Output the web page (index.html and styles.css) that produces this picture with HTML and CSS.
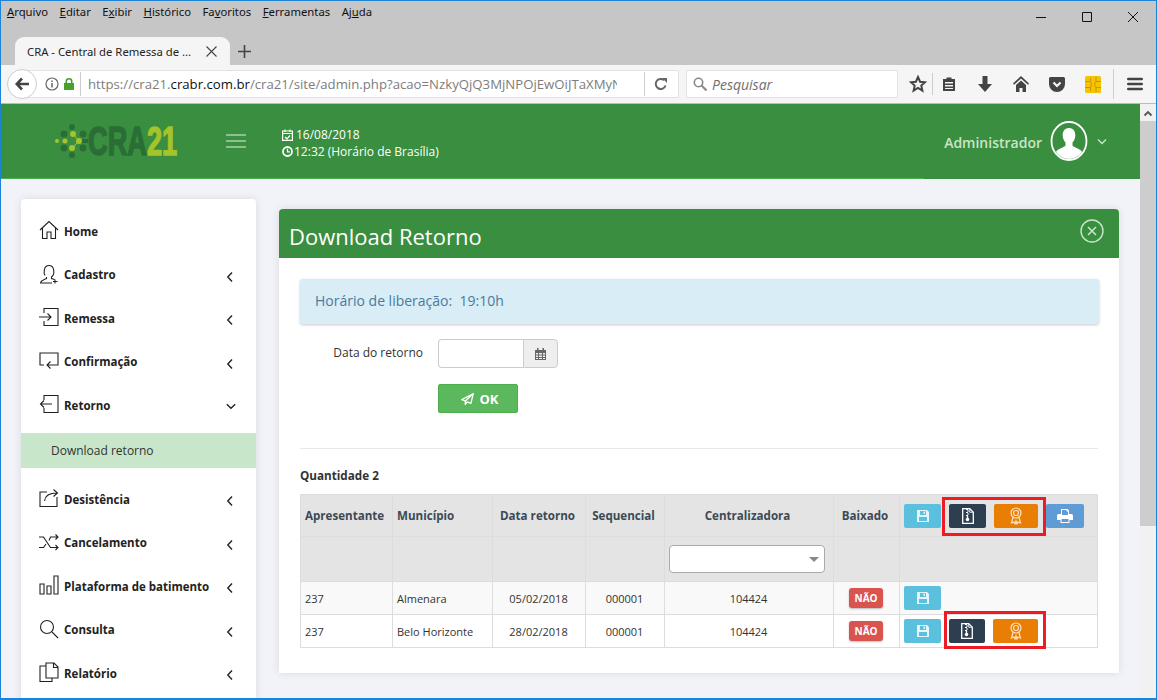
FILE: index.html
```html
<!DOCTYPE html>
<html lang="pt-BR">
<head>
  <meta charset="UTF-8" />
  <title>CRA - Central de Remessa de Arquivos</title>
  <link rel="stylesheet" href="styles.css">
</head>
<body>
  <svg class="defs" width="0" height="0">
    <symbol id="i-save" viewBox="0 0 14 14"><path fill="#e4f6fb" fill-rule="evenodd" d="M1 1h10l2 2v10H1zM4 2v4h6V2zM3 8v4h8V8z"/><path fill="#e4f6fb" d="M7.500 2.500h1.500v2.500H7.500z"/></symbol>
    <symbol id="i-zip" viewBox="0 0 14 16"><path fill="none" stroke="#fff" stroke-width="1.300" d="M1.700.700h7l3.600 3.600v11H1.700z"/><path fill="none" stroke="#cfe3f5" d="M8.700.700v3.600h3.600"/><path fill="#fff" d="M5 1h2v1H5zM6 2.500h2v1H6zM5 4h2v1H5zM6 5.500h2v1H6zM5 7h2v1H5z"/><circle cx="6.500" cy="11.500" r="1.800" fill="#fff"/><path fill="#fff" d="M5.800 8h1.400v3H5.800z"/></symbol>
    <symbol id="i-award" viewBox="0 0 14 18"><g fill="none" stroke="#ffe3bd" stroke-width="1.200"><circle cx="7" cy="6" r="5"/><circle cx="7" cy="6" r="2.500"/><path d="M4 10.500 2.500 16l2.500-1 1 2 1-3 1 3 1-2 2.500 1L10 10.500"/></g></symbol>
    <symbol id="i-left" viewBox="0 0 8 12"><path fill="none" stroke="#222" stroke-width="1.400" d="M6 1.500 1.800 6 6 10.500"/></symbol>
  </svg>

  <div class="janela">
    <header class="navegador">
      <div class="barra-menu">
        <nav class="menu">
          <span><u>A</u>rquivo</span>
          <span><u>E</u>ditar</span>
          <span>E<u>x</u>ibir</span>
          <span><u>H</u>istórico</span>
          <span>Fa<u>v</u>oritos</span>
          <span><u>F</u>erramentas</span>
          <span>Aj<u>u</u>da</span>
        </nav>
        <div class="controles">
          <svg width="12" height="12" viewBox="0 0 12 12"><path stroke="#111" d="M1 6.500h10"/></svg>
          <svg width="12" height="12" viewBox="0 0 12 12"><path fill="none" stroke="#111" d="M1.500 1.500h9v9h-9z"/></svg>
          <svg width="12" height="12" viewBox="0 0 12 12"><path stroke="#111" d="M1 1l10 10M11 1 1 11"/></svg>
        </div>
      </div>
      <div class="barra-abas">
        <div class="aba">
          <span class="aba-titulo">CRA - Central de Remessa de ...</span>
          <svg width="11" height="11" viewBox="0 0 11 11"><path stroke="#444" stroke-width="1.100" d="M.5.500l10 10M10.500.500l-10 10"/></svg>
        </div>
        <svg class="nova-aba" width="13" height="13" viewBox="0 0 13 13"><path stroke="#444" stroke-width="1.600" d="M6.500 0v13M0 6.500h13"/></svg>
      </div>
      <div class="barra-url">
        <div class="voltar">
          <svg width="14" height="14" viewBox="0 0 14 14"><path fill="none" stroke="#444" stroke-width="2.600" d="M7 1.500 1.800 7 7 12.500M2 7h12"/></svg>
        </div>
        <div class="url">
          <svg class="url-info" width="14" height="14" viewBox="0 0 14 14"><circle cx="7" cy="7" r="6" fill="none" stroke="#666" stroke-width="1.200"/><path stroke="#666" stroke-width="1.500" d="M7 6v4.500M7 3.500v1.500"/></svg>
          <svg class="url-cadeado" width="10" height="12" viewBox="0 0 10 12"><path fill="#4aa02c" d="M0 5h10v7H0z"/><path fill="none" stroke="#4aa02c" stroke-width="1.600" d="M2.300 5V3.200a2.700 2.400 0 0 1 5.400 0V5"/></svg>
          <span class="url-texto">https://cra21.<b>crabr.com.br</b>/cra21/site/admin.php?acao=NzkyQjQ3MjNPOjEwOiJTaXMyN</span>
          <span class="url-recarregar">
            <svg width="14" height="14" viewBox="0 0 14 14"><path fill="none" stroke="#666" stroke-width="2" d="M11.500 8.500A5 5 0 1 1 10 3.200"/><path fill="#666" d="M8 1h5v5z"/></svg>
          </span>
        </div>
        <div class="busca">
          <svg width="14" height="14" viewBox="0 0 14 14"><circle cx="5.500" cy="5.500" r="4.200" fill="none" stroke="#888" stroke-width="1.600"/><path stroke="#888" stroke-width="2" d="M8.500 8.500l5 5"/></svg>
          <span>Pesquisar</span>
        </div>
        <div class="ferramentas">
          <svg class="f-estrela" width="18" height="18" viewBox="0 0 18 18"><path fill="none" stroke="#444" stroke-width="2" d="M9 2l2.100 4.700 5 .5-3.800 3.400 1.100 5L9 13l-4.400 2.600 1.100-5L1.900 7.200l5-.5z"/></svg>
          <i class="sep sep-estrela"></i>
          <svg class="f-lista" width="14" height="16" viewBox="0 0 14 16"><path fill="#444" fill-rule="evenodd" d="M1 3h3.500V1.500h5V3H13v12H1zM3 6v1.500h8V6zM3 9v1.500h8V9zM3 12v1h8v-1z"/></svg>
          <svg class="f-baixar" width="14" height="16" viewBox="0 0 14 16"><path fill="#444" d="M4.500 0h5v8H14l-7 8-7-8h4.500z"/></svg>
          <svg class="f-casa" width="16" height="16" viewBox="0 0 16 16"><path fill="#444" d="M8 0l8 7.500-1 1.300L8 2.600 1 8.800 0 7.500zM3 9l5-4.500L13 9v7H9.500v-4h-3v4H3z"/></svg>
          <svg class="f-pocket" width="16" height="15" viewBox="0 0 16 15"><path fill="#444" d="M1.500 0h13A1.500 1.500 0 0 1 16 1.500V7A8 8 0 0 1 0 7V1.500A1.500 1.500 0 0 1 1.500 0z"/><path fill="none" stroke="#f5f5f5" stroke-width="2.200" d="M4.500 5.500 8 9l3.500-3.500"/></svg>
          <svg class="f-chip" width="16" height="17" viewBox="0 0 16 17"><rect width="16" height="17" rx="1.500" fill="#f5c400"/><path fill="none" stroke="#c99600" d="M0 5.500h5.500V2M16 5.500h-5V1M0 11.500h5.500V15M16 11.500h-5V16M5.500 5.500c1 2 1 4 0 6M10.500 5.500c-1 2-1 4 0 6"/></svg>
          <i class="sep sep-menu"></i>
          <svg class="f-menu" width="16" height="14" viewBox="0 0 16 14"><path stroke="#444" stroke-width="2.600" stroke-linecap="round" d="M1.300 2h13.400M1.300 7h13.400M1.300 12h13.400"/></svg>
        </div>
      </div>
    </header>

    <div class="visor">
      <div class="pagina">
        <div class="topo">
          <div class="logo">
            <svg width="33" height="34" viewBox="0 0 33 34">
              <g fill="#2a6e35"><circle cx="17" cy="3" r="3"/><circle cx="17" cy="31" r="3"/><circle cx="9" cy="10" r="3.500"/><circle cx="9" cy="24" r="3.500"/><circle cx="28" cy="10" r="3.500"/><circle cx="28" cy="24" r="3.500"/><path d="M26 15h7v4h-7z"/></g>
              <g fill="#a5c32b"><circle cx="2" cy="17" r="2"/><circle cx="10" cy="17" r="2.500"/><circle cx="18" cy="10" r="3"/><circle cx="24" cy="17" r="3"/><circle cx="17" cy="24" r="3"/></g>
              <path fill="none" stroke="#a5c32b" d="M18 10l6 7-7 7"/>
            </svg>
            <span class="logo-nome">CRA<b>21</b></span>
          </div>
          <svg class="hamburguer" width="20" height="14" viewBox="0 0 20 14"><path stroke="#8cc08f" stroke-width="2" d="M0 1h20M0 7h20M0 13h20"/></svg>
          <div class="data-hora">
            <div class="data-linha">
              <svg width="11" height="12" viewBox="0 0 11 12"><path fill="none" stroke="#fff" stroke-width="1.200" d="M.6 2h9.800v9.400H.6zM.6 4.500h9.800M3 .5v2.500M8 .5v2.500M3 8l2 1.800L8 6.500"/></svg>
              16/08/2018
            </div>
            <div class="data-linha hora">
              <svg width="11" height="11" viewBox="0 0 11 11"><circle cx="5.500" cy="5.500" r="4.500" fill="none" stroke="#fff" stroke-width="1.800"/><path fill="none" stroke="#fff" stroke-width="1.200" d="M5.500 2.800v3h2.400"/></svg>
              12:32 (Horário de Brasília)
            </div>
          </div>
          <div class="usuario">
            <span>Administrador</span>
            <svg width="38" height="40" viewBox="0 0 38 40">
              <ellipse cx="19" cy="20" rx="17.500" ry="19" fill="#3a8e3f" stroke="#fff" stroke-width="1.800"/>
              <path fill="#fff" d="M19 7c4 0 6.500 3 6.300 7.500-.2 3-1.300 5.500-2.800 7v3c1 2 8 3 9.500 6.500A17 18 0 0 1 19 38 17 18 0 0 1 6 31c1.500-3.500 8.500-4.500 9.500-6.500v-3c-1.500-1.500-2.600-4-2.800-7C12.500 10 15 7 19 7z"/>
            </svg>
            <svg width="10" height="7" viewBox="0 0 10 7"><path fill="none" stroke="#c8e6c9" stroke-width="1.400" d="M1 1.500l4 4 4-4"/></svg>
          </div>
        </div>
        <div class="progresso"></div>

        <div class="principal">
          <aside class="lateral">
            <a class="item">
              <svg viewBox="0 0 20 20"><path d="M1 10 10 1.500 19 10M3.500 8v10.500H8V12h4v6.500h4.500V8"/></svg>
              <span>Home</span>
            </a>
            <a class="item">
              <svg viewBox="0 0 20 20"><path d="M6 11.500C4.500 9 4.500 1.500 10 1.500S15.500 9 14 11.500l-1.500 1.500v1.500l3 1M7.500 13v1.500C6 15.500 2 16 1.500 19H13M16 15.500v4M14 17.500h4.500"/></svg>
              <span>Cadastro</span>
              <svg class="seta"><use href="#i-left"/></svg>
            </a>
            <a class="item">
              <svg viewBox="0 0 20 20"><path d="M5 6V1.500h14v17H5V14M0 10h12M8.500 6.500l3.500 3.500-3.500 3.500"/></svg>
              <span>Remessa</span>
              <svg class="seta"><use href="#i-left"/></svg>
            </a>
            <a class="item">
              <svg viewBox="0 0 20 20"><path d="M5 14H1V2h18v12H8M11.500 10.500 8 14l3.500 3.500"/></svg>
              <span>Confirmação</span>
              <svg class="seta"><use href="#i-left"/></svg>
            </a>
            <a class="item">
              <svg viewBox="0 0 20 20"><path d="M5 6V1.500h14v17H5V14M2 10h11M5 6.500 1.500 10 5 13.500"/></svg>
              <span>Retorno</span>
              <svg class="seta-baixo" width="10" height="7" viewBox="0 0 10 7"><path fill="none" stroke="#222" stroke-width="1.400" d="M.8 1.200 5 5.300l4.200-4.100"/></svg>
            </a>
            <a class="subitem">Download retorno</a>
            <a class="item">
              <svg viewBox="0 0 20 20"><path d="M8 4H1v14.500h17V9M5.500 13C6 8 10 5 18 5M14.500 1.500 18.500 5l-4 3.500"/></svg>
              <span>Desistência</span>
              <svg class="seta"><use href="#i-left"/></svg>
            </a>
            <a class="item">
              <svg viewBox="0 0 20 20"><path d="M0 5h4.500l7 10.500H19M0 15.500h4.500L7 12M10 8.500 11.500 5H19M16.500 2.500 19 5l-2.500 2.500M16.500 13l2.500 2.500-2.500 2.500"/></svg>
              <span>Cancelamento</span>
              <svg class="seta"><use href="#i-left"/></svg>
            </a>
            <a class="item">
              <svg viewBox="0 0 20 20"><path d="M1 9h4v10H1zM8 11h4v8H8zM15 1h4v18h-4z"/></svg>
              <span>Plataforma de batimento</span>
              <svg class="seta"><use href="#i-left"/></svg>
            </a>
            <a class="item">
              <svg viewBox="0 0 20 20"><circle cx="8" cy="8" r="6.500"/><path d="M13 13l6 6"/></svg>
              <span>Consulta</span>
              <svg class="seta"><use href="#i-left"/></svg>
            </a>
            <a class="item">
              <svg viewBox="0 0 20 20"><path d="M7 4H1v15.500h12V16M7 16V1h8l4 4v11zM14.500 1v4.500H19"/></svg>
              <span>Relatório</span>
              <svg class="seta"><use href="#i-left"/></svg>
            </a>
          </aside>

          <main class="painel">
            <div class="painel-topo">
              <h1>Download Retorno</h1>
              <svg width="24" height="24" viewBox="0 0 24 24"><circle cx="12" cy="12" r="11" fill="none" stroke="#c8e6c9" stroke-width="1.400"/><path stroke="#c8e6c9" stroke-width="1.600" d="M8 8l8 8M16 8l-8 8"/></svg>
            </div>
            <div class="painel-corpo">
              <div class="alerta">Horário de liberação:&nbsp; 19:10h</div>
              <div class="campo">
                <label for="data">Data do retorno</label>
                <div class="grupo-data">
                  <input id="data" type="text" />
                  <span class="calendario">
                    <svg width="11" height="12" viewBox="0 0 11 12"><path fill="#666" fill-rule="evenodd" d="M0 2h2V0h1.500v2h4V0H9v2h2v10H0zM1 5v1.500h2V5zM4 5v1.500h3V5zM8 5v1.500h2V5zM1 7.500V9h2V7.500zM4 7.500V9h3V7.500zM8 7.500V9h2V7.500zM1 10v1h2v-1zM4 10v1h3v-1zM8 10v1h2v-1z"/></svg>
                  </span>
                </div>
              </div>
              <button class="btn-ok" type="button">
                <svg width="13" height="12" viewBox="0 0 13 12"><path fill="none" stroke="#fff" stroke-width="1.300" stroke-linejoin="round" d="M12.300.7.800 6.600l3.500 1.300zM12.300.7 4.300 7.900v3.400l2-2.400 3.600 1.500z"/></svg>
                OK
              </button>
              <hr />
              <p class="quantidade">Quantidade 2</p>
              <table class="tabela">
                <colgroup>
                  <col class="c-apresentante" /><col class="c-municipio" /><col class="c-data" /><col class="c-seq" /><col class="c-central" /><col class="c-baixado" /><col />
                </colgroup>
                <thead>
                  <tr class="linha-titulo">
                    <th class="esq">Apresentante</th>
                    <th class="esq">Município</th>
                    <th>Data retorno</th>
                    <th>Sequencial</th>
                    <th>Centralizadora</th>
                    <th>Baixado</th>
                    <th class="acoes">
                      <button class="btn btn-azul" type="button"><svg width="14" height="14"><use href="#i-save"/></svg></button>
                      <span class="destaque">
                        <button class="btn btn-escuro" type="button"><svg width="14" height="16"><use href="#i-zip"/></svg></button>
                        <button class="btn btn-laranja" type="button"><svg width="14" height="18"><use href="#i-award"/></svg></button>
                      </span>
                      <button class="btn btn-imprimir" type="button">
                        <svg width="16" height="14" viewBox="0 0 16 14"><path fill="#fff" fill-rule="evenodd" d="M4 0h6.500L12 1.500V5h2.500A1.500 1.500 0 0 1 16 6.500V11h-3.500v3h-9v-3H0V6.500A1.500 1.500 0 0 1 1.500 5H4zM5 1v5h6V2.500H9.500V1zM4.500 10v3h7v-3z"/></svg>
                      </button>
                    </th>
                  </tr>
                  <tr class="linha-filtro">
                    <th></th><th></th><th></th><th></th>
                    <th>
                      <div class="filtro"><i></i></div>
                    </th>
                    <th></th><th></th>
                  </tr>
                </thead>
                <tbody>
                  <tr class="par">
                    <td class="esq">237</td>
                    <td class="esq">Almenara</td>
                    <td>05/02/2018</td>
                    <td>000001</td>
                    <td>104424</td>
                    <td><span class="selo">NÃO</span></td>
                    <td class="acoes">
                      <button class="btn btn-azul" type="button"><svg width="14" height="14"><use href="#i-save"/></svg></button>
                    </td>
                  </tr>
                  <tr>
                    <td class="esq">237</td>
                    <td class="esq">Belo Horizonte</td>
                    <td>28/02/2018</td>
                    <td>000001</td>
                    <td>104424</td>
                    <td><span class="selo">NÃO</span></td>
                    <td class="acoes">
                      <button class="btn btn-azul" type="button"><svg width="14" height="14"><use href="#i-save"/></svg></button>
                      <span class="destaque destaque-linha">
                        <button class="btn btn-escuro" type="button"><svg width="14" height="16"><use href="#i-zip"/></svg></button>
                        <button class="btn btn-laranja" type="button"><svg width="14" height="18"><use href="#i-award"/></svg></button>
                      </span>
                    </td>
                  </tr>
                </tbody>
              </table>
            </div>
          </main>
        </div>
      </div>

      <div class="rolagem">
        <svg width="10" height="7" viewBox="0 0 10 7"><path fill="none" stroke="#555" stroke-width="1.800" d="M1.500 5.500 5 2l3.500 3.500"/></svg>
        <div class="rolagem-barra"></div>
      </div>
    </div>
  </div>
</body>
</html>
```

FILE: styles.css
```css
* { box-sizing: border-box; }
html, body { margin: 0; height: 100%; overflow: hidden; }
body { font-family: "Open Sans", Arial, sans-serif; color: #333; background: #f1f3f8; }
.defs { position: absolute; }
svg { display: block; flex: none; }
button { font-family: inherit; }

.janela { height: 700px; border: 1px solid #1b84d8; border-bottom-width: 2px; display: flex; flex-direction: column; overflow: hidden; }

/* navegador */
.navegador { flex: none; background: #c6c6c6; }
.barra-menu { height: 36px; display: flex; justify-content: space-between; font-family: "Noto Sans", sans-serif; font-size: 11.300px; color: #111; }
.menu { display: flex; gap: 11.500px; padding: 3px 0 0 6px; height: 20px; }
.menu span { line-height: 15px; }
.controles { display: flex; gap: 34px; padding: 10px 17px 0 0; }
.barra-abas { height: 28px; display: flex; align-items: center; padding-left: 14px; }
.aba { width: 215px; height: 28px; background: #f5f5f5; border-radius: 9px 9px 0 0; display: flex; align-items: center; padding: 0 13px 0 12px; gap: 10px; }
.aba-titulo { flex: 1; font-family: "Noto Sans", sans-serif; font-size: 11.300px; color: #222; white-space: nowrap; }
.nova-aba { margin-left: 8px; }
.barra-url { height: 39px; background: #f5f5f5; border-bottom: 1px solid #bbb; display: flex; align-items: center; position: relative; padding-left: 21px; }
.voltar { position: absolute; left: 6px; top: 4px; width: 30px; height: 30px; border-radius: 50%; background: #fff; border: 1px solid #ccc; display: flex; align-items: center; justify-content: center; z-index: 1; }
.url { width: 657px; height: 28px; background: #fff; border: 1px solid #e2e2e2; display: flex; align-items: center; padding-left: 22px; font-size: 13.200px; }
.url-cadeado { margin-left: 5px; }
.url-texto { margin-left: 6px; padding-left: 7px; border-left: 1px solid #ccc; width: 537px; color: #7d7d7d; white-space: nowrap; overflow: hidden; line-height: 24px; }
.url-texto b { font-weight: 400; color: #111; }
.url-recarregar { width: 34px; height: 24px; margin-left: 27px; border-left: 1px solid #ccc; display: flex; align-items: center; padding-left: 9px; }
.busca { margin-left: 7px; width: 212px; height: 28px; background: #fff; border: 1px solid #e2e2e2; display: flex; align-items: center; padding-left: 6px; gap: 5px; font-size: 14px; font-style: italic; color: #6f6f6f; }
.ferramentas { margin-left: 11px; display: flex; align-items: center; height: 30px; }
.sep { display: block; width: 1px; background: #ccc; }
.sep-estrela { height: 22px; margin: 0 9px 0 5px; }
.sep-menu { height: 30px; margin: 0 13px 0 12px; }
.f-baixar { margin-left: 22px; }
.f-casa { margin-left: 21px; }
.f-pocket { margin-left: 20px; }
.f-chip { margin-left: 20px; }

/* area da pagina */
.visor { flex: 1; min-height: 0; display: flex; }
.pagina { flex: 1; min-width: 0; display: flex; flex-direction: column; }
.rolagem { width: 16px; background: #f1f1f1; display: flex; flex-direction: column; align-items: center; padding-top: 6px; }
.rolagem-barra { width: 16px; height: 405px; margin-top: 4px; background: #cdcdcd; }

.topo { height: 74px; background: #3a8e3f; display: flex; align-items: center; flex: none; padding-left: 54px; }
.progresso { height: 1px; flex: none; background: linear-gradient(to right, #4caf50 923px, #3a8e3f 923px); }
.logo { display: flex; align-items: center; width: 171px; }
.logo-nome { font-family: "Liberation Sans", Arial, sans-serif; font-weight: 700; font-size: 40px; line-height: 34px; color: #2a6e35; transform: scaleX(.68); transform-origin: left center; -webkit-text-stroke: 1.500px #2a6e35; }
.logo-nome b { color: #a5c32b; -webkit-text-stroke: 1.500px #a5c32b; }
.data-hora { margin-left: 36px; margin-top: 4px; font-size: 12px; color: #fff; line-height: 17px; }
.data-linha { display: flex; align-items: center; gap: 3px; }
.hora { gap: 1px; }
.usuario { margin-left: auto; margin-right: 33px; display: flex; align-items: center; font-size: 14px; font-weight: 600; color: #c8e6c9; }
.usuario span { margin: 2px 8px 0 0; }
.usuario svg:last-child { margin-left: 9px; }

.principal { flex: 1; min-height: 0; display: flex; gap: 23px; padding: 20px 20px 0; overflow: hidden; align-items: flex-start; }

/* menu lateral */
.lateral { width: 235px; flex: none; height: 520px; background: #fff; border-radius: 4px 4px 0 0; box-shadow: 0 0 8px rgba(0,0,0,.1); padding-top: 10.700px; }
.item { height: 43.500px; display: flex; align-items: center; padding: 0 22px 0 18px; font-size: 11.500px; font-weight: 700; color: #222; }
.item > svg:first-child { width: 20px; height: 20px; margin-right: 5px; fill: none; stroke: #222; stroke-width: 1.100; margin-top: -2px; }
.item span { flex: 1; white-space: nowrap; }
.seta { width: 8px; height: 12px; margin-top: 4px; }
.seta-baixo { margin-right: -2px; margin-top: 2px; }
.subitem { display: block; height: 35px; line-height: 35px; margin: 6.300px 0 9px; padding-left: 30px; background: #c8e6c9; font-size: 12px; color: #333; }

/* painel */
.painel { width: 840px; flex: none; margin-top: 10px; background: #fff; border-radius: 4px 4px 0 0; box-shadow: 0 0 8px rgba(0,0,0,.1); }
.painel-topo { height: 49px; background: #3a8e3f; border-radius: 4px 4px 0 0; display: flex; justify-content: space-between; padding: 10px 15px 0 10px; color: #fff; }
.painel-topo h1 { margin: -1px 0 0; font-size: 22px; font-weight: 400; line-height: 36px; }
.painel-corpo { padding: 21px 20px 25px 21px; height: 415px; }
.alerta { width: 799px; height: 45px; line-height: 44px; padding-left: 15px; background: #d9edf7; border-radius: 3px; color: #4a7a9c; font-size: 14px; box-shadow: 0 1px 3px rgba(0,0,0,.22); }
.campo { display: flex; align-items: center; margin-top: 15px; }
.campo label { width: 123px; text-align: right; font-size: 12px; color: #333; margin-top: -3px; }
.grupo-data { display: flex; margin-left: 15px; height: 29px; }
.grupo-data input { width: 85px; height: 29px; border: 1px solid #ccc; border-right: 0; border-radius: 4px 0 0 4px; padding: 0 6px; }
.calendario { width: 35px; background: #eee; border: 1px solid #ccc; border-radius: 0 4px 4px 0; display: flex; align-items: center; justify-content: center; }
.btn-ok { display: flex; align-items: center; justify-content: center; gap: 6px; width: 80px; height: 29px; margin: 16px 0 0 138px; padding: 0 0 0 3px; background: #5cb85c; border: 1px solid #4cae4c; border-radius: 2px; color: #fff; font-size: 13px; font-weight: 700; }
hr { border: 0; border-top: 1px solid #e8e8e8; margin: 35px 0 0 0; width: 798px; }
.quantidade { margin: 18px 0 10px; font-size: 11.700px; font-weight: 700; line-height: 17px; color: #333; }

/* tabela */
.tabela { width: 798px; table-layout: fixed; border-collapse: collapse; font-size: 11px; color: #333; }
.c-apresentante { width: 92px; }
.c-municipio { width: 100px; }
.c-data { width: 93px; }
.c-seq { width: 79px; }
.c-central { width: 169px; }
.c-baixado { width: 66px; }
.tabela th, .tabela td { border: 1px solid #ddd; text-align: center; padding: 0; }
.tabela .esq { text-align: left; padding-left: 4px; }
.tabela thead th { background: #e4e4e4; font-size: 11.600px; font-weight: 700; color: #3b4a54; white-space: nowrap; }
.linha-titulo th { padding-right: 3px; }
.tabela tbody td { padding-right: 1px; }
.linha-titulo { height: 42px; }
.linha-filtro { height: 45px; }
.tabela tbody tr { height: 33px; }
.par td { background: #f9f9f9; }
.tabela .acoes { text-align: left; padding-left: 4px; font-size: 0; white-space: nowrap; }
.filtro { position: relative; width: 156px; height: 28px; margin-left: 4px; background: #fff; border: 1px solid #aaa; border-radius: 4px; }
.filtro i { position: absolute; right: 5px; top: 11px; border: 5px solid transparent; border-top: 5px solid #888; border-bottom: 0; }
.selo { display: inline-block; width: 34px; height: 20px; line-height: 20px; background: #d9534f; border-radius: 3px; color: #fff; font-size: 10px; font-weight: 700; box-shadow: 0 1px 2px rgba(0,0,0,.25); }

.btn { height: 24px; width: 37px; border: 0; border-radius: 2px; padding: 0; display: inline-flex; align-items: center; justify-content: center; vertical-align: middle; }
.btn-azul { background: #5bc0de; }
.btn-escuro { background: #2c3e50; }
.btn-laranja { background: #e87e04; width: 44px; }
.btn-imprimir { background: #5f9bd5; width: 38px; margin-left: 8px; }
.destaque { position: relative; display: inline-flex; gap: 8px; margin-left: 8px; vertical-align: middle; }
.destaque::after { content: ""; position: absolute; inset: -7px -8px -8px -7px; border: 3px solid #ed1c24; }
.destaque-linha .btn-laranja { width: 45px; }
.destaque-linha .btn-escuro { width: 36px; }
.destaque-linha::after { inset: -8px -8px -6px -5px; }
```
